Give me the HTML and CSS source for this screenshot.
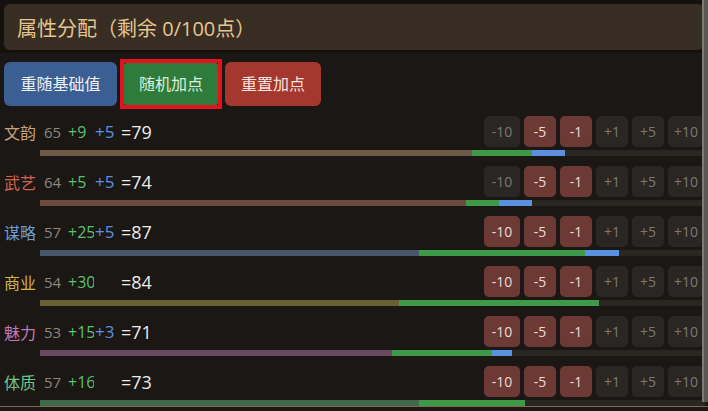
FILE: index.html
```html
<!DOCTYPE html>
<html lang="zh">
<head>
<meta charset="utf-8">
<link rel="stylesheet" href="styles.css">
</head>
<body>
<div class="page">
  <div class="head-wrap">
    <div class="panel">属性分配（剩余 0/100点）</div>
  </div>
  <div class="actions">
    <button class="btn btn-blue">重随基础值</button>
    <button class="btn btn-green">随机加点</button>
    <button class="btn btn-red">重置加点</button>
  </div>
  <div class="rows">
    <div class="row">
      <div class="line">
        <div class="info"><span class="lab c-wen">文韵</span><span class="base">65</span><span class="plus">+9</span><span class="bonus">+5</span><span class="total">=79</span></div>
        <div class="steps"><span class="st wide">-10</span><span class="st on">-5</span><span class="st on">-1</span><span class="st">+1</span><span class="st">+5</span><span class="st wide">+10</span></div>
      </div>
      <div class="bar"><span class="seg b-wen" style="width:65%"></span><span class="seg g" style="width:9%"></span><span class="seg u" style="width:5%"></span></div>
    </div>
    <div class="row">
      <div class="line">
        <div class="info"><span class="lab c-wu">武艺</span><span class="base">64</span><span class="plus">+5</span><span class="bonus">+5</span><span class="total">=74</span></div>
        <div class="steps"><span class="st wide">-10</span><span class="st on">-5</span><span class="st on">-1</span><span class="st">+1</span><span class="st">+5</span><span class="st wide">+10</span></div>
      </div>
      <div class="bar"><span class="seg b-wu" style="width:64%"></span><span class="seg g" style="width:5%"></span><span class="seg u" style="width:5%"></span></div>
    </div>
    <div class="row">
      <div class="line">
        <div class="info"><span class="lab c-mou">谋略</span><span class="base">57</span><span class="plus">+25</span><span class="bonus">+5</span><span class="total">=87</span></div>
        <div class="steps"><span class="st wide on">-10</span><span class="st on">-5</span><span class="st on">-1</span><span class="st">+1</span><span class="st">+5</span><span class="st wide">+10</span></div>
      </div>
      <div class="bar"><span class="seg b-mou" style="width:57%"></span><span class="seg g" style="width:25%"></span><span class="seg u" style="width:5%"></span></div>
    </div>
    <div class="row">
      <div class="line">
        <div class="info"><span class="lab c-shang">商业</span><span class="base">54</span><span class="plus">+30</span><span class="bonus"></span><span class="total">=84</span></div>
        <div class="steps"><span class="st wide on">-10</span><span class="st on">-5</span><span class="st on">-1</span><span class="st">+1</span><span class="st">+5</span><span class="st wide">+10</span></div>
      </div>
      <div class="bar"><span class="seg b-shang" style="width:54%"></span><span class="seg g" style="width:30%"></span></div>
    </div>
    <div class="row">
      <div class="line">
        <div class="info"><span class="lab c-mei">魅力</span><span class="base">53</span><span class="plus">+15</span><span class="bonus">+3</span><span class="total">=71</span></div>
        <div class="steps"><span class="st wide on">-10</span><span class="st on">-5</span><span class="st on">-1</span><span class="st">+1</span><span class="st">+5</span><span class="st wide">+10</span></div>
      </div>
      <div class="bar"><span class="seg b-mei" style="width:53%"></span><span class="seg g" style="width:15%"></span><span class="seg u" style="width:3%"></span></div>
    </div>
    <div class="row">
      <div class="line">
        <div class="info"><span class="lab c-ti">体质</span><span class="base">57</span><span class="plus">+16</span><span class="bonus"></span><span class="total">=73</span></div>
        <div class="steps"><span class="st wide on">-10</span><span class="st on">-5</span><span class="st on">-1</span><span class="st">+1</span><span class="st">+5</span><span class="st wide">+10</span></div>
      </div>
      <div class="bar"><span class="seg b-ti" style="width:57%"></span><span class="seg g" style="width:16%"></span></div>
    </div>
  </div>
  <div class="divider"></div>
</div>
<div class="scrollbar"></div>
</body>
</html>
```
FILE: styles.css
```css
html, body {
  margin: 0;
  padding: 0;
  background: #1a1714;
  overflow: hidden;
  height: 411px;
}
body {
  font-family: "Open Sans", "Noto Sans CJK SC", sans-serif;
  color: #e8e4de;
  width: 708px;
}
.page {
  width: 708px;
}
.head-wrap {
  background: #14110e;
  padding: 4px 4px 3px 4px;
}
.panel {
  background: #382d23;
  border-radius: 6px;
  height: 46px;
  display: flex;
  align-items: center;
  padding-left: 13px;
  font-size: 20px;
  color: #e6c68e;
}
.actions {
  display: flex;
  gap: 6px;
  padding: 9px 4px 0 4px;
}
.btn {
  font-family: inherit;
  font-size: 16px;
  border: none;
  border-radius: 6px;
  height: 44px;
  padding: 0 16px;
  color: #eef2f8;
  line-height: 44px;
  position: relative;
}
.btn-blue { background: #3b5f93; width: 113px; }
.btn-green {
  background: #2f7b3c;
  color: #dcf0dc;
  width: 96px;
}
.btn-green::after {
  content: "";
  position: absolute;
  left: -3px;
  top: -3px;
  right: -3px;
  bottom: -3px;
  border: 4px solid #e3121c;
}
.btn-red { background: #a4382f; color: #f8e2de; width: 96px; }
.rows {
  padding: 10px 4px 0 4px;
  display: flex;
  flex-direction: column;
  gap: 10px;
}
.row {
  display: flex;
  flex-direction: column;
}
.line {
  display: flex;
  align-items: center;
  justify-content: space-between;
  height: 31px;
}
.info {
  display: flex;
  align-items: center;
  white-space: nowrap;
}
.lab {
  width: 40px;
  font-size: 16px;
  font-family: "Noto Sans CJK SC", sans-serif;
}
.base {
  width: 24px;
  font-size: 15px;
  color: #8c8680;
}
.plus {
  width: 26px;
  overflow: hidden;
  font-size: 16px;
  color: #5cc06e;
  margin-right: 1px;
}
.bonus {
  width: 26px;
  overflow: hidden;
  font-size: 17px;
  color: #5a90e2;
}
.total {
  font-size: 18px;
  color: #ecebe8;
}
.c-wen { color: #c8a27a; }
.c-wu { color: #d2644e; }
.c-mou { color: #6a9fd8; }
.c-shang { color: #d4b44a; }
.c-mei { color: #c676b4; }
.c-ti { color: #6cc486; }
.steps {
  display: flex;
  gap: 4px;
}
.st {
  width: 32px;
  height: 31px;
  border-radius: 5px;
  background: #2a2623;
  color: #7e7873;
  font-size: 14px;
  display: flex;
  align-items: center;
  justify-content: center;
}
.st.wide { width: 36px; }
.st.on {
  background: #6d3935;
  color: #ecdcd6;
}
.bar {
  margin: 3px -1px 0 36px;
  height: 6px;
  background: #2a2622;
  display: flex;
}
.seg { height: 6px; display: block; }
.g { background: #3f9a48; }
.u { background: #5b8fe0; }
.b-wen { background: #6e5a48; }
.b-wu { background: #6e4a3e; }
.b-mou { background: #47576b; }
.b-shang { background: #6b6035; }
.b-mei { background: #6a4862; }
.b-ti { background: #40684a; }
.divider {
  height: 1px;
  background: #806b4e;
}
.scrollbar {
  position: absolute;
  top: 0;
  right: 0;
  width: 4px;
  height: 402px;
  background: #5a5855;
  border-left: 2px solid #7c7a74;
}
```
